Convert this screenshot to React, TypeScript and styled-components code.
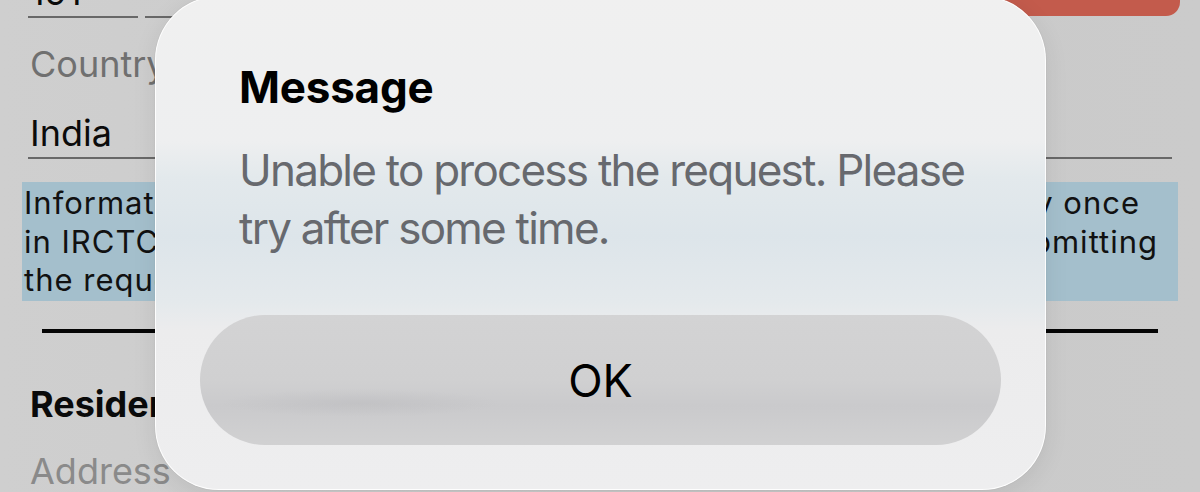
import * as React from 'react';
import styled, { createGlobalStyle } from 'styled-components';

const FONT = `'Inter', 'Noto Sans', 'Liberation Sans', sans-serif`;

const GlobalStyle = createGlobalStyle`
  html, body {
    margin: 0;
    padding: 0;
    background: #cbcbcb;
    overflow: hidden;
  }
  body {
    font-family: ${FONT};
  }
`;

export default function App() {
  return (
    <>
      <GlobalStyle />
      <Screen>
        <Form>
          <TopRow>
            <Field $width="110px">
              <FieldValue>191</FieldValue>
            </Field>
            <Field $grow>
              <FieldValue>&nbsp;</FieldValue>
            </Field>
            <SaveButton />
          </TopRow>

          <Label>Country</Label>
          <Field $gap="25px">
            <FieldValue>India</FieldValue>
          </Field>

          <Notice>
            <NoticeLine $end="36px">
              <span>Information regarding nationality</span>
              <span>can be updated only once</span>
            </NoticeLine>
            <NoticeLine $end="18px">
              <span>in IRCTC account.</span>
              <span>Please verify the details before submitting</span>
            </NoticeLine>
            <NoticeLine>
              <span>the request.</span>
            </NoticeLine>
          </Notice>

          <Divider />

          <SectionTitle>Residential Address</SectionTitle>
          <Label $light>Address</Label>
        </Form>

        <Alert role="alertdialog">
          <AlertTitle>Message</AlertTitle>
          <AlertBody>
            Unable to process the request. Please
            <br />
            try after some time.
          </AlertBody>
          <AlertButton type="button">OK</AlertButton>
        </Alert>
      </Screen>
    </>
  );
}

const Screen = styled.div`
  position: relative;
  width: 1200px;
  height: 492px;
  overflow: hidden;
  background: linear-gradient(90deg, #cfcfcf 0%, #c9c9c9 60%, #cbcbcb 100%);
`;

const Form = styled.div`
  display: flex;
  flex-direction: column;
  padding: 0 22px;
`;

const Field = styled.div<{ $width?: string; $grow?: boolean; $gap?: string }>`
  margin: ${(p) => p.$gap ?? '0'} 6px 0;
  flex: ${(p) => (p.$grow ? '1' : 'none')};
  width: ${(p) => p.$width ?? 'auto'};
  border-bottom: 2px solid #686868;
  padding-bottom: 2px;
`;

const TopRow = styled.div`
  display: flex;
  align-items: flex-end;
  gap: 7px;
  margin-top: -30px;
  padding: 0 6px;

  & > ${Field} {
    margin: 0;
  }
`;

const FieldValue = styled.div`
  font-size: 36px;
  line-height: 44px;
  color: #0b0b0b;
  padding-left: 2px;
  white-space: nowrap;
`;

const SaveButton = styled.div`
  width: 177px;
  height: 44px;
  margin: 0 -8px 2px 0;
  background: #c35b4c;
  border-radius: 14px;
`;

const Label = styled.div<{ $light?: boolean }>`
  margin: ${(p) => (p.$light ? '23px' : '24px')} 6px 0;
  padding-left: 2px;
  font-size: 36px;
  line-height: 44px;
  color: ${(p) => (p.$light ? '#8a8a8a' : '#707070')};
`;

const Notice = styled.div`
  margin-top: 23px;
  padding: 2px 2px 1px;
  background: #a4bfcc;
  font-size: 31px;
  line-height: 38.5px;
  letter-spacing: 1px;
  color: #111;
`;

const NoticeLine = styled.div<{ $end?: string }>`
  display: flex;
  justify-content: space-between;
  white-space: nowrap;
  padding-right: ${(p) => p.$end ?? '0'};
`;

const Divider = styled.div`
  margin: 28px 20px 0;
  height: 4px;
  background: #050505;
`;

const SectionTitle = styled.div`
  margin: 49px 6px 0;
  padding-left: 2px;
  font-size: 36px;
  line-height: 44px;
  font-weight: 700;
  color: #0a0a0a;
`;

const Alert = styled.div`
  position: absolute;
  left: 155px;
  top: -4px;
  width: 891px;
  height: 494px;
  box-sizing: border-box;
  padding: 65px 44px 0;
  display: flex;
  flex-direction: column;
  border-radius: 64px;
  border: 1.5px solid rgba(255, 255, 255, 0.9);
  background: linear-gradient(
    180deg,
    #f0f0f0 0px,
    #eeeff0 144px,
    #e3e9ec 180px,
    #dde5ea 240px,
    #e4e9ec 304px,
    #ececed 334px,
    #eeeeef 100%
  );
  box-shadow: 0 0 1px rgba(0, 0, 0, 0.2), 0 6px 24px rgba(0, 0, 0, 0.08);
`;

const AlertTitle = styled.div`
  padding: 0 39px;
  font-size: 44px;
  line-height: 50px;
  font-weight: 700;
  letter-spacing: -0.005em;
  color: #000;
`;

const AlertBody = styled.div`
  margin-top: 29px;
  padding: 0 39px;
  font-size: 44px;
  line-height: 58px;
  letter-spacing: -0.04em;
  white-space: nowrap;
  color: #67696e;
`;

const AlertButton = styled.button`
  margin-top: 58px;
  height: 130px;
  border: none;
  border-radius: 65px;
  font-family: ${FONT};
  font-size: 45px;
  color: #000;
  background:
    radial-gradient(ellipse 140px 14px at 160px 88px, rgba(150, 150, 155, 0.16), transparent),
    linear-gradient(180deg, #d3d3d4 0%, #d0d0d1 50%, #cacacc 70%, #d1d1d2 100%);
  cursor: pointer;
`;
